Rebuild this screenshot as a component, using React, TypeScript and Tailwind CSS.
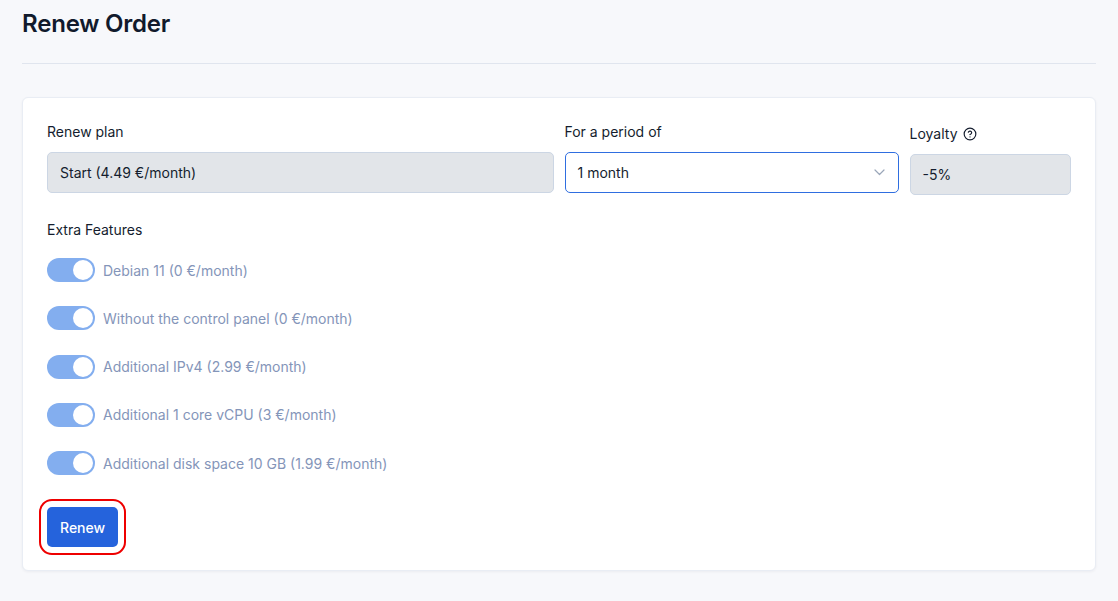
import React from "react";

const features = [
  "Debian 11 (0 €/month)",
  "Without the control panel (0 €/month)",
  "Additional IPv4 (2.99 €/month)",
  "Additional 1 core vCPU (3 €/month)",
  "Additional disk space 10 GB (1.99 €/month)",
];

function Toggle() {
  return (
    <div className="relative h-6 w-12 shrink-0 rounded-full bg-[#83aeef]">
      <div className="absolute right-[2px] top-[2px] h-5 w-5 rounded-full bg-white" />
    </div>
  );
}

export default function App() {
  return (
    <div
      className="min-h-[601px] bg-[#f7f8fb] px-[22px] pt-[8px] text-[#141d2e]"
      style={{ fontFamily: "Inter, 'Noto Sans', sans-serif" }}
    >
      <div className="border-b border-[#e0e5ee] pb-[23px]">
        <h1 className="text-[24px] font-semibold leading-8 tracking-[-0.2px] text-[#111a2c]">Renew Order</h1>
      </div>

      <div className="mt-[33px] w-[1074px] rounded-md border border-[#e9edf4] bg-white p-6 pb-[23px] shadow-[0_1px_3px_rgba(16,24,40,0.05)]">
        <div className="grid grid-cols-12 gap-x-[11px]">
          <div className="col-span-6">
            <div className="text-[14px] leading-5">Renew plan</div>
            <div className="mt-[10px] flex h-[41px] items-center rounded-[5px] border border-[#ccd6e4] bg-[#e2e5e9] px-3 text-[14px]">
              Start (4.49 €/month)
            </div>
          </div>
          <div className="col-span-4">
            <div className="text-[14px] leading-5">For a period of</div>
            <div className="mt-[10px] flex h-[41px] items-center justify-between rounded-[5px] border border-[#2f6ee0] bg-white pl-3 pr-[13px] text-[14px]">
              <span>1 month</span>
              <svg width="11" height="7" viewBox="0 0 11 7" fill="none">
                <path d="M1 1l4.5 4.5L10 1" stroke="#9aa6b9" strokeWidth="1.2" strokeLinecap="round" strokeLinejoin="round" />
              </svg>
            </div>
          </div>
          <div className="col-span-2 pt-[2px]">
            <div className="flex items-center gap-[5px] text-[14px] leading-5">
              <span>Loyalty</span>
              <svg width="14" height="14" viewBox="0 0 24 24" fill="none" stroke="#141d2e" strokeWidth="2" strokeLinecap="round" strokeLinejoin="round">
                <circle cx="12" cy="12" r="10" />
                <path d="M9.1 9a3 3 0 0 1 5.8 1c0 2-3 3-3 3" />
                <path d="M12 17h.01" />
              </svg>
            </div>
            <div className="mt-[10px] flex h-[41px] items-center rounded-[5px] border border-[#ccd6e4] bg-[#e2e5e9] px-3 text-[14px]">
              -5%
            </div>
          </div>
        </div>

        <div className="mt-[25px] text-[14px] leading-5">Extra Features</div>

        <div className="mt-[18px] flex flex-col gap-[24.3px]">
          {features.map((f) => (
            <div key={f} className="flex h-6 items-center gap-2">
              <Toggle />
              <span className="text-[14px] text-[#8495b9]">{f}</span>
            </div>
          ))}
        </div>

        <button className="mt-[32px] h-10 rounded-[5px] bg-[#2563dc] px-[13px] text-[14px] font-medium text-white outline-2 outline-offset-[6px] outline-[#ee0000] outline-solid">
          Renew
        </button>
      </div>
    </div>
  );
}
